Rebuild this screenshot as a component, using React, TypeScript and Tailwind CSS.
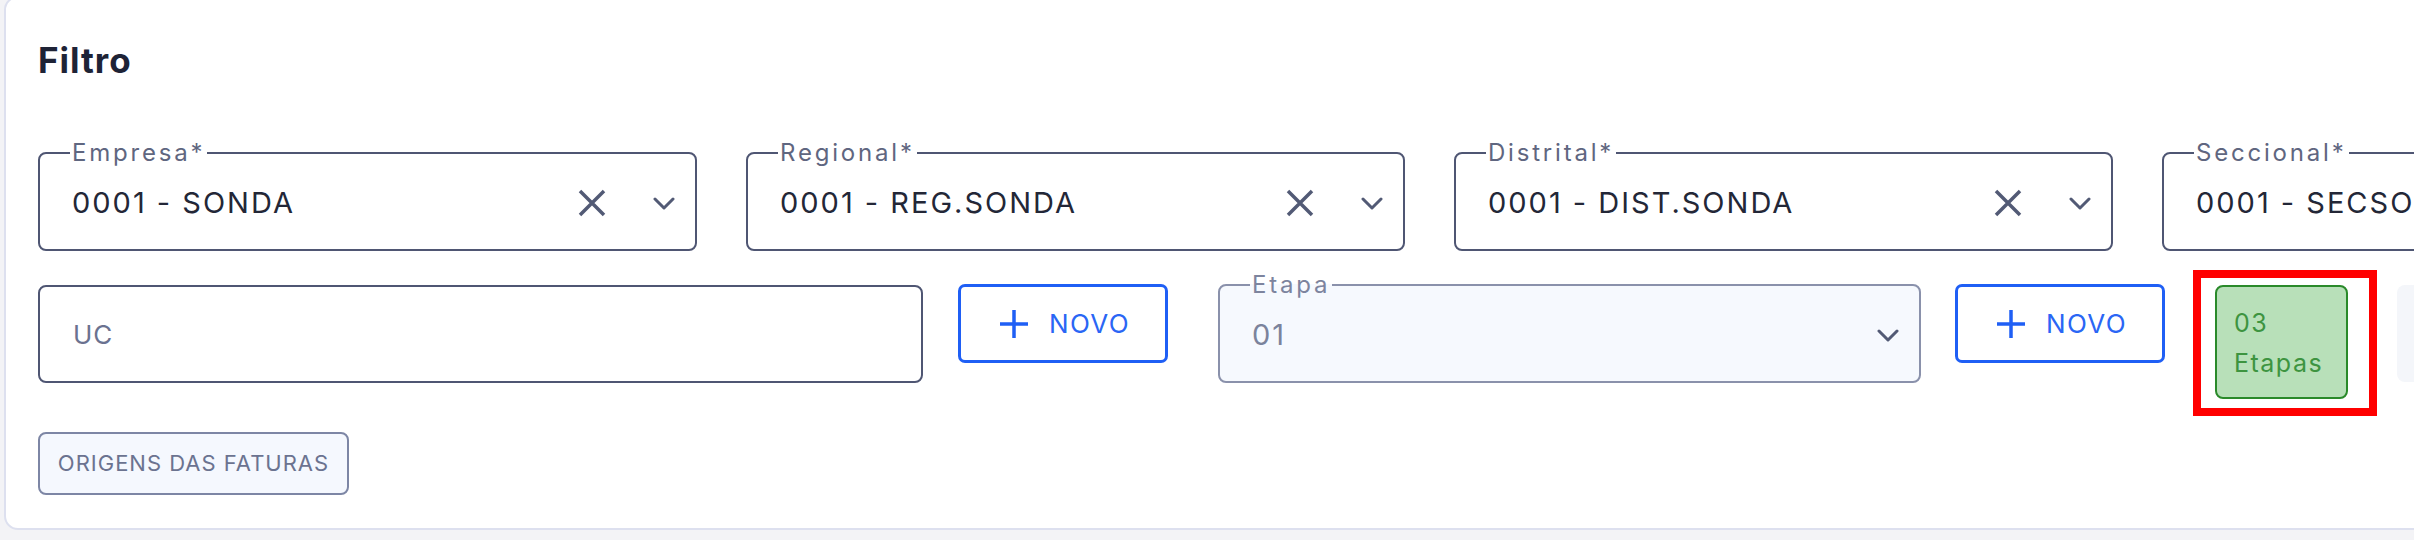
import React from 'react';

function ClearIcon() {
  return (
    <svg width="28" height="28" viewBox="0 0 28 28" fill="none" stroke="#525a75" strokeWidth="3.5">
      <path d="M2 2 26 26M26 2 2 26" />
    </svg>
  );
}

function ChevronIcon({ color }: { color: string }) {
  return (
    <svg width="22" height="13" viewBox="0 0 22 13" fill="none" stroke={color} strokeWidth="3" strokeLinecap="round" strokeLinejoin="round">
      <path d="M2 2l9 9 9-9" />
    </svg>
  );
}

function PlusIcon() {
  return (
    <svg width="28" height="28" viewBox="0 0 28 28" fill="none" stroke="#1f5ff5" strokeWidth="3.5">
      <path d="M14 0v28M0 14h28" />
    </svg>
  );
}

interface SelectFieldProps {
  label: string;
  value: string;
  width: string;
  disabled?: boolean;
}

function SelectField({ label, value, width, disabled = false }: SelectFieldProps) {
  return (
    <fieldset
      className={
        width +
        ' shrink-0 rounded-[8px] border-2 pl-[32px] pr-[20px] pb-[7px] ' +
        (disabled ? 'border-[#8a91ab] bg-[#f6f9fe]' : 'border-[#4f5673] bg-white')
      }
    >
      <legend
        className={
          '-ml-[2px] px-[2px] text-[24px] leading-[22px] tracking-[2.8px] ' +
          (disabled ? 'text-[#7d849e]' : 'text-[#5f6680]')
        }
      >
        {label}
      </legend>
      <div className="flex h-[78px] items-center">
        <span
          className={
            'flex-1 whitespace-nowrap text-[29px] leading-[28px] tracking-[2px] ' +
            (disabled ? 'text-[#7b839c]' : 'text-[#232737]')
          }
        >
          {value}
        </span>
        {!disabled && <ClearIcon />}
        <span className={disabled ? 'ml-0' : 'ml-[47px]'}>
          <ChevronIcon color="#525a75" />
        </span>
      </div>
    </fieldset>
  );
}

function NovoButton() {
  return (
    <button className="mt-[10px] flex h-[79px] w-[210px] shrink-0 items-center justify-center gap-[21px] rounded-[7px] border-[3px] border-[#1f5ff5] bg-white pl-[4px]">
      <PlusIcon />
      <span className="text-[26px] leading-[26px] tracking-[1.4px] text-[#2a66f5]">NOVO</span>
    </button>
  );
}

export default function App() {
  return (
    <div className="h-[540px] w-[2414px] overflow-hidden bg-[#f3f3f6] font-['Inter',sans-serif]">
      <div className="-mt-[4px] ml-[4px] h-[534px] w-[3000px] rounded-[14px] border-2 border-[#dde0ef] bg-white pl-[32px] pt-[42px]">
        <h2 className="text-[35px] font-bold leading-[40px] tracking-[1px] text-[#1e2336]">Filtro</h2>

        {/* Linha 1 */}
        <div className="mt-[62px] flex gap-[49px]">
          <SelectField label="Empresa*" value="0001 - SONDA" width="w-[659px]" />
          <SelectField label="Regional*" value="0001 - REG.SONDA" width="w-[659px]" />
          <SelectField label="Distrital*" value="0001 - DIST.SONDA" width="w-[659px]" />
          <SelectField label="Seccional*" value="0001 - SECSONDA" width="w-[659px]" />
        </div>

        {/* Linha 2 */}
        <div className="mt-[23px] flex items-start">
          <div className="flex shrink-0 items-start gap-[35px]">
            <div className="mt-[11px] flex h-[98px] w-[885px] items-center rounded-[8px] border-2 border-[#4f5673] pl-[33px] text-[26px] tracking-[1px] text-[#6b7290]">
              UC
            </div>
            <NovoButton />
          </div>
          <div className="ml-[50px] flex shrink-0 items-start gap-[34px]">
            <SelectField label="Etapa" value="01" width="w-[703px]" disabled />
            <NovoButton />
          </div>
          <div className="relative ml-[50px] mt-[11px] shrink-0">
            <div className="flex h-[114px] w-[133px] flex-col rounded-[8px] border-2 border-[#2a8a2a] bg-[#b8e0b9] pl-[17px] pt-[16px] text-[25px] leading-[40px] tracking-[1.5px] text-[#3d9440]">
              <span>03</span>
              <span>Etapas</span>
            </div>
            <span className="pointer-events-none absolute -bottom-[17px] -left-[22px] -right-[29px] -top-[15px] border-[8px] border-[#ff0000]" />
          </div>
          <div className="ml-[49px] mt-[11px] h-[97px] w-[200px] shrink-0 rounded-[8px] bg-[#f4f6fa]" />
        </div>

        {/* Linha 3 */}
        <button className="mt-[33px] flex h-[63px] w-[311px] items-center justify-center rounded-[8px] border-2 border-[#7d86a5] bg-[#f5f8fe] text-[22px] tracking-[1px] text-[#6b7390]">
          ORIGENS DAS FATURAS
        </button>
      </div>
    </div>
  );
}
